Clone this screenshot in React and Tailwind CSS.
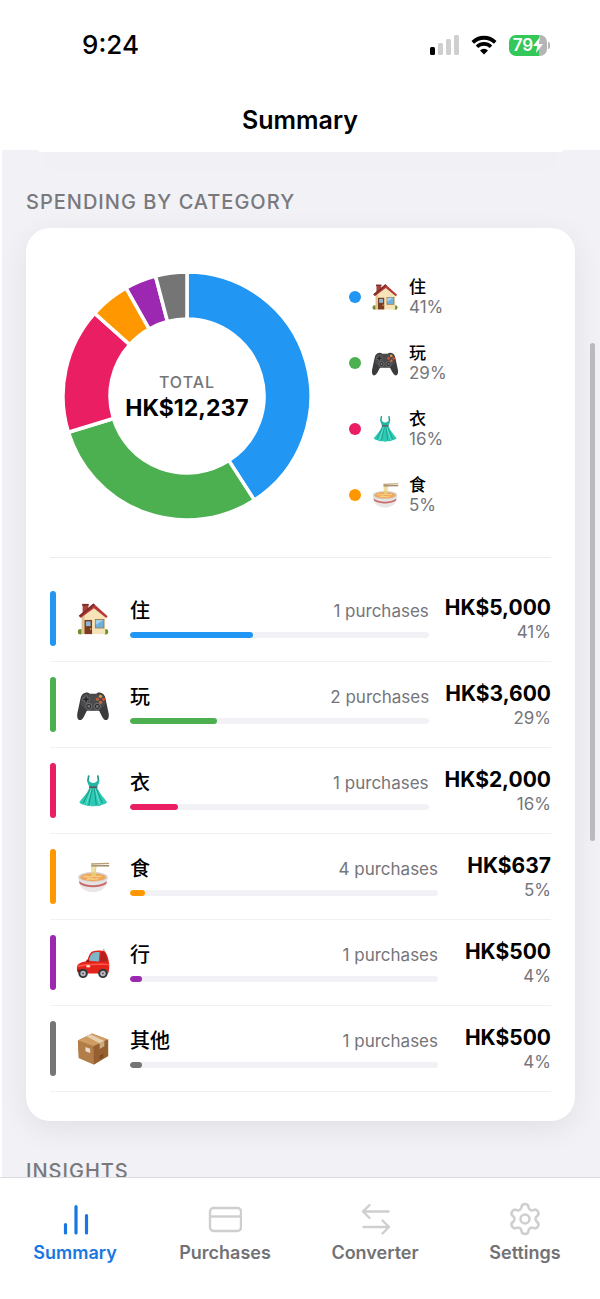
import React, { useState } from 'react';
import { Settings } from 'lucide-react';

const categories = [
  { id: 'home', name: '住', amount: 5000, purchases: 1, color: '#2196f3' },
  { id: 'play', name: '玩', amount: 3600, purchases: 2, color: '#4caf50' },
  { id: 'clothes', name: '衣', amount: 2000, purchases: 1, color: '#e91e63' },
  { id: 'food', name: '食', amount: 637, purchases: 4, color: '#ff9800' },
  { id: 'travel', name: '行', amount: 500, purchases: 1, color: '#9c27b0' },
  { id: 'other', name: '其他', amount: 500, purchases: 1, color: '#757575' },
];

const total = categories.reduce((sum, c) => sum + c.amount, 0);
const percent = (amount) => Math.round((amount / total) * 100);
const money = (amount) => 'HK$' + amount.toLocaleString('en-US');

function HouseIcon() {
  return (
    <>
      <ellipse cx="4.5" cy="31.5" rx="2.6" ry="2.8" fill="#6f8f2f" />
      <ellipse cx="31.5" cy="31.5" rx="2.6" ry="2.8" fill="#6f8f2f" />
      <path d="M7 3h6v9H7z" fill="#a8433a" />
      <path d="M6.500 2h7v2h-7z" fill="#7d2e2a" />
      <path d="M6 15 19 3l12 13v18H6z" fill="#f6e3b8" />
      <path d="M6 15 9 12v22H6z" fill="#dfc590" />
      <path d="m3 14.500 15.500-13L33.500 15l-1.500 2L19 6.500 5 17z" fill="#b43a38" />
      <path d="m3 14.500 15.500-13L20 3 4.500 16z" fill="#7d2e2a" />
      <path d="M9 19h8v15H9z" fill="#7c3b22" />
      <path d="M10.500 20.500h5v5h-5z" fill="#8fb7cf" />
      <circle cx="15.500" cy="28.500" r="0.8" fill="#e8c06a" />
      <path d="M20 18h10v10H20z" fill="#9c7f55" />
      <path d="M21 19h8v8h-8z" fill="#6fb0dc" />
      <path d="M21 19h8l-8 5z" fill="#a5d2ee" />
    </>
  );
}

function GamepadIcon() {
  return (
    <>
      <path
        d="M8.500 5.500C10 4.500 13 4.300 14.500 6h7c1.500-1.700 4.500-1.500 6-.5 2 1 3 2.500 3.700 5.500l3.300 15.500c.8 4.500-.5 7.500-2.500 7.500s-3.500-2-5-5l-2.500-5h-13l-2.500 5c-1.500 3-3 5-5 5s-3.300-3-2.500-7.500L4.800 11c.7-3 1.700-4.500 3.700-5.500z"
        fill="#3b3b3d"
      />
      <path d="M6 10c1-3 3-4 6-3.500h12c3-.5 5 .5 6 3.500l1 7c-3 5-7 6-9 6h-8c-2 0-6-1-9-6z" fill="#4b4b4e" />
      <path d="M9.500 8.500h2.500v2.300h2.300v2.500H12v2.300H9.500v-2.300H7.200v-2.500h2.300z" fill="#232325" stroke="#8a8a8d" strokeWidth="0.6" />
      <circle cx="26" cy="8.800" r="1.700" fill="#e09a38" />
      <circle cx="22.700" cy="12" r="1.700" fill="#c95b36" />
      <circle cx="29.200" cy="12" r="1.700" fill="#d7482f" />
      <circle cx="26" cy="15.200" r="1.700" fill="#c8683e" />
      <circle cx="13.500" cy="19.500" r="3.200" fill="#2b2b2d" stroke="#88888b" strokeWidth="0.8" />
      <circle cx="22.500" cy="19.500" r="3.200" fill="#2b2b2d" stroke="#88888b" strokeWidth="0.8" />
      <circle cx="13.500" cy="19.500" r="1.400" fill="#77777a" />
      <circle cx="22.500" cy="19.500" r="1.400" fill="#77777a" />
    </>
  );
}

function DressIcon() {
  return (
    <>
      <path d="M13.500 1.500 12.500 8M23 1.500 24 8" stroke="#1b9a8b" strokeWidth="1.800" fill="none" />
      <path d="M12.500 6c2 1.500 3 3.500 5.700 3.500S22 7.500 24 6l.4 3-1.900 4.500h-8.500L12.200 9z" fill="#23b8a4" />
      <path d="M14 14.500h8.500c2 5.500 7 10.500 10.500 15.500-2 2-4 2.500-5.500 2.500-2 1.500-5 1.500-6 1-2 1-5 1-6.500 0-2 .5-5 .3-6.500-1-2 0-4-1-5-2.500 3.500-5 9-10 10.500-15.500z" fill="#2ecab5" />
      <path d="m15 16-7.500 15M17 16l-3.500 17M19.500 16l2 17M21.500 16l6.500 15" stroke="#159583" strokeWidth="1" fill="none" />
      <path d="m16 16-5 15.500M20.500 16l4.500 15.500" stroke="#6fe6d5" strokeWidth="1" fill="none" />
      <path d="M14 13h8.500v2H14z" fill="#4d5860" />
    </>
  );
}

function NoodlesIcon() {
  return (
    <>
      <path d="M2.500 18c0 10 6 16 15.500 16s15.500-6 15.500-16z" fill="#e4e2e2" />
      <path d="M3.500 23c1 5 3 7 5.500 8.500 6 3 12 3 18 0 2.500-1.500 4.500-3.500 5.500-8.500-8 5-21 5-29 0z" fill="#e9e6e5" />
      <path d="M3.200 22.500c8 5.500 21.600 5.500 29.600 0l-.8 3c-8 4.500-20 4.500-28 0z" fill="#c9696a" />
      <ellipse cx="18" cy="18" rx="15.500" ry="5.300" fill="#d5d3d1" />
      <ellipse cx="18" cy="18.300" rx="13.500" ry="4.200" fill="#eea65b" />
      <path d="M8 18c3-2 6 1.500 9-.5s7 1.500 10-.5M11 20.500c4-1.500 8 .8 13-.7" stroke="#f8d38a" strokeWidth="1.400" fill="none" />
      <path d="M17 5v12M19 5v12M21 5c.5 5-1.500 8-.5 12" stroke="#ecd079" strokeWidth="1.300" fill="none" />
      <path d="M16 3.500 35 2.800v1.500l-19 .7z" fill="#b89c72" />
      <path d="m16 5.500 19-.2v1.500l-19 .2z" fill="#9c8461" />
    </>
  );
}

function CarIcon() {
  return (
    <>
      <path d="M29.500 3v5" stroke="#777" strokeWidth="0.800" />
      <path d="M12 16c1-5 3-9.500 6-10.500 4-1 10-1 13 .5 2 3 3.500 8 4 12 .5 5 0 9-1 11H4c-2.500-1-3.500-4-3-7 .5-3 4-5 11-6z" fill="#e3221b" />
      <path d="M13.500 15.500c1-4.500 3-8 5.500-8.700 2-.4 4-.5 6-.5l-.8 10z" fill="#7cb8c9" />
      <path d="m26.500 6.300c2 0 3 .3 4 .8 1.500 2.500 2.300 5.500 2.500 9l-7.300.5z" fill="#b3211f" />
      <path d="M1.500 21c8-2.500 20-3 33.500-2v1.500c-13-1-25-.5-33 2z" fill="#ff5a4b" />
      <path d="M11 14.500h3v2.500h-3z" fill="#a31512" />
      <ellipse cx="13" cy="21.500" rx="2" ry="1.300" fill="#f9e3c8" />
      <path d="M1 25h6v3H2z" fill="#8d1512" />
      <circle cx="7.500" cy="29" r="5" fill="#35383b" />
      <circle cx="7.500" cy="29" r="2.900" fill="#b8bcc0" />
      <circle cx="7.500" cy="29" r="1" fill="#55595d" />
      <circle cx="28.500" cy="29" r="5" fill="#35383b" />
      <circle cx="28.500" cy="29" r="2.900" fill="#b8bcc0" />
      <circle cx="28.500" cy="29" r="1" fill="#55595d" />
    </>
  );
}

function BoxIcon() {
  return (
    <>
      <path d="m2 9 15-7.500L34 8v17.500L19 34.500 3 27.500z" fill="#b07a43" />
      <path d="m2 9 15-7.500L34 8 18.500 15z" fill="#cf9c63" />
      <path d="M2 9l16.500 6 .5 19.500L3 27.500z" fill="#b37d49" />
      <path d="M18.500 15 34 8v17.500L19 34.500z" fill="#966031" />
      <path d="m11 4.500 4-2 15 7-5 2.500z" fill="#e6cfae" />
      <path d="m25 12 5-2.300v5.500L25 18z" fill="#c9ab84" />
      <path d="m10 16 5 1.800v4.500l-5-2z" fill="#e8dccb" />
      <path d="m25 26 4-2M25 28l4-2" stroke="#5d3816" strokeWidth="0.900" />
    </>
  );
}

const emojis = {
  home: HouseIcon,
  play: GamepadIcon,
  clothes: DressIcon,
  food: NoodlesIcon,
  travel: CarIcon,
  other: BoxIcon,
};

function Emoji({ id, className }) {
  const Drawing = emojis[id];
  return (
    <svg viewBox="0 0 36 36" className={className} aria-hidden="true">
      <Drawing />
    </svg>
  );
}

function DonutChart() {
  // radii include half of the white stroke between the slices
  const outer = 124;
  const inner = 77;
  const point = (r, a) => `${(r * Math.sin(a)).toFixed(2)} ${(-r * Math.cos(a)).toFixed(2)}`;
  let start = 0;

  return (
    <svg viewBox="-124 -124 248 248" className="w-full" role="img" aria-label="Spending by category">
      {categories.map((c) => {
        const end = start + (c.amount / total) * Math.PI * 2;
        const large = end - start > Math.PI ? 1 : 0;
        const d = `M${point(outer, start)}A${outer} ${outer} 0 ${large} 1 ${point(outer, end)}L${point(inner, end)}A${inner} ${inner} 0 ${large} 0 ${point(inner, start)}Z`;
        start = end;
        return <path key={c.id} d={d} fill={c.color} stroke="#fff" strokeWidth="3.500" />;
      })}
    </svg>
  );
}

function StatusBar() {
  return (
    <div className="flex h-[90px] items-center justify-between pl-[82px] pr-[50px]">
      <span className="text-[26px] leading-8 font-medium">9:24</span>
      <div className="flex items-center gap-3">
        <svg viewBox="0 0 29 20" className="h-5 w-[29px]" aria-hidden="true">
          <rect x="0" y="12" width="5" height="8" rx="1.500" fill="#000" />
          <rect x="8" y="8" width="5" height="12" rx="1.500" fill="#cfcfcf" />
          <rect x="16" y="4" width="5" height="16" rx="1.500" fill="#cfcfcf" />
          <rect x="24" y="0" width="5" height="20" rx="1.500" fill="#cfcfcf" />
        </svg>
        <svg viewBox="0 0 26 20" className="h-5 w-[26px]" fill="none" stroke="#000" aria-hidden="true">
          <path d="M1.800 7.300a16 16 0 0 1 22.400 0" strokeWidth="3.800" />
          <path d="M6 11.700a10 10 0 0 1 14 0" strokeWidth="3.600" />
          <path d="M13 19.500 9 15.400a5.700 5.700 0 0 1 8 0z" fill="#000" stroke="none" />
        </svg>
        <div className="flex items-center gap-px">
          <div className="flex h-[21px] w-[38px] items-center justify-center rounded-[7px] bg-linear-to-r from-[#34c759] from-80% to-[#b5b5b5] to-80% text-white">
            <span className="text-[17px] leading-5 font-semibold">79</span>
            <svg viewBox="0 0 10 16" className="h-4 w-[10px]" aria-hidden="true">
              <path d="M7 0 0 9h4.200L3 16l7-9H5.800z" fill="#fff" />
            </svg>
          </div>
          <div className="h-[7px] w-[2px] rounded-r bg-[#b5b5b5]" />
        </div>
      </div>
    </div>
  );
}

function SectionTitle({ children }) {
  return (
    <h2 className="mt-[38px] mb-[14px] text-[20px] leading-6 font-medium tracking-[1px] whitespace-nowrap text-[#78787d] uppercase">
      {children}
    </h2>
  );
}

function LegendItem({ category }) {
  return (
    <li className="flex items-center">
      <span className="size-3 rounded-full" style={{ backgroundColor: category.color }} />
      <Emoji id={category.id} className="ml-[10px] size-7" />
      <div className="ml-[10px]">
        <div className="text-[17px] leading-5 font-medium">{category.name}</div>
        <div className="text-[17px] leading-5 text-[#75757a]">{percent(category.amount)}%</div>
      </div>
    </li>
  );
}

function CategoryRow({ category }) {
  const share = percent(category.amount);
  return (
    <li className="flex h-[86px] items-center border-b border-[#f1f1f4]">
      <span className="h-[55px] w-[6px] rounded-full" style={{ backgroundColor: category.color }} />
      <Emoji id={category.id} className="ml-5 size-[34px]" />
      <div className="ml-5 flex-1 pb-1">
        <div className="flex h-[30px] items-center justify-between">
          <span className="text-[20px] leading-6 font-medium">{category.name}</span>
          <span className="text-[17px] leading-6 text-[#75757a]">{category.purchases} purchases</span>
        </div>
        <div className="mt-[6px] h-[6px] overflow-hidden rounded-full bg-[#f2f2f6]">
          <div className="h-full rounded-full" style={{ width: `${share}%`, backgroundColor: category.color }} />
        </div>
      </div>
      <div className="ml-4 min-w-[97px] pt-[2px] text-right">
        <div className="text-[21px] leading-6 font-bold">{money(category.amount)}</div>
        <div className="text-[17px] leading-6 text-[#75757a]">{share}%</div>
      </div>
    </li>
  );
}

function BarsIcon() {
  return (
    <svg viewBox="0 0 34 34" className="size-[34px]" fill="none" stroke="currentColor" strokeWidth="3.200" strokeLinecap="round" aria-hidden="true">
      <path d="M7.500 22.500v8.500M18 4.500v26.500M28.500 13.500v17.500" />
    </svg>
  );
}

function CardIcon() {
  return (
    <svg viewBox="0 0 34 34" className="size-[34px]" fill="none" stroke="currentColor" strokeWidth="2.400" aria-hidden="true">
      <rect x="2" y="6" width="31" height="23" rx="3.500" />
      <path d="M2 14.500h31" />
    </svg>
  );
}

function ArrowsIcon() {
  return (
    <svg viewBox="0 0 34 34" className="size-[34px]" fill="none" stroke="currentColor" strokeWidth="2.400" strokeLinecap="round" strokeLinejoin="round" aria-hidden="true">
      <path d="M30.500 9.500H5M11.500 3 5 9.500l6.500 6.500M5.500 25h25.500M24.500 18.500 31 25l-6.500 6.500" />
    </svg>
  );
}

const tabs = [
  { label: 'Summary', icon: <BarsIcon /> },
  { label: 'Purchases', icon: <CardIcon /> },
  { label: 'Converter', icon: <ArrowsIcon /> },
  { label: 'Settings', icon: <Settings size={36} strokeWidth={1.7} /> },
];

function App() {
  const [activeTab, setActiveTab] = useState('Summary');

  return (
    <div className="flex h-screen flex-col bg-white font-[Inter,'Noto_Sans_CJK_SC',sans-serif] text-black">
      <header className="h-[150px]">
        <StatusBar />
        <h1 className="pt-[14px] text-center text-[25px] leading-8 font-semibold">Summary</h1>
      </header>

      <main className="relative min-h-0 flex-1 overflow-hidden border-l-2 border-white bg-[#f1f1f6] pr-[25px] pl-6">
        <div className="h-[2px] px-3">
          <div className="h-full rounded-b-full bg-white shadow-[0_8px_24px_rgba(0,0,0,0.09)]" />
        </div>

        <SectionTitle>Spending by category</SectionTitle>
        <section className="rounded-3xl bg-white px-6 pt-[44px] pb-[29px] shadow-[0_8px_30px_rgba(0,0,0,0.07)]">
          <div className="flex items-center pb-[37px]">
            <div className="relative ml-[13px] w-[248px]">
              <DonutChart />
              <div className="absolute inset-0 flex flex-col items-center justify-center">
                <span className="text-[16px] leading-6 font-medium tracking-[1px] text-[#75757a]">TOTAL</span>
                <span className="text-[23px] leading-7 font-bold">{money(total)}</span>
              </div>
            </div>
            <ul className="ml-[38px] flex flex-col gap-[26px]">
              {categories.slice(0, 4).map((c) => (
                <LegendItem key={c.id} category={c} />
              ))}
            </ul>
          </div>
          <ul className="border-t border-[#ececf0] pt-[18px]">
            {categories.map((c) => (
              <CategoryRow key={c.id} category={c} />
            ))}
          </ul>
        </section>

        <SectionTitle>Insights</SectionTitle>

        {/* scroll thumb */}
        <div className="absolute top-[193px] right-[5px] h-[498px] w-[5px] rounded-full bg-[#b9b9be]" />
      </main>

      <nav className="flex h-[122px] items-start border-t border-[#dcdce0] pt-[23px]">
        {tabs.map((tab) => (
          <button
            key={tab.label}
            type="button"
            onClick={() => setActiveTab(tab.label)}
            className={
              'flex flex-1 flex-col items-center gap-1 ' +
              (activeTab === tab.label ? 'text-[#1877e0]' : 'text-[#cfcfd1]')
            }
          >
            <span className="flex h-9 items-center">{tab.icon}</span>
            <span
              className={
                'text-[18px] leading-6 font-semibold ' +
                (activeTab === tab.label ? 'text-[#1877e0]' : 'text-[#727276]')
              }
            >
              {tab.label}
            </span>
          </button>
        ))}
      </nav>
    </div>
  );
}

export default App;
